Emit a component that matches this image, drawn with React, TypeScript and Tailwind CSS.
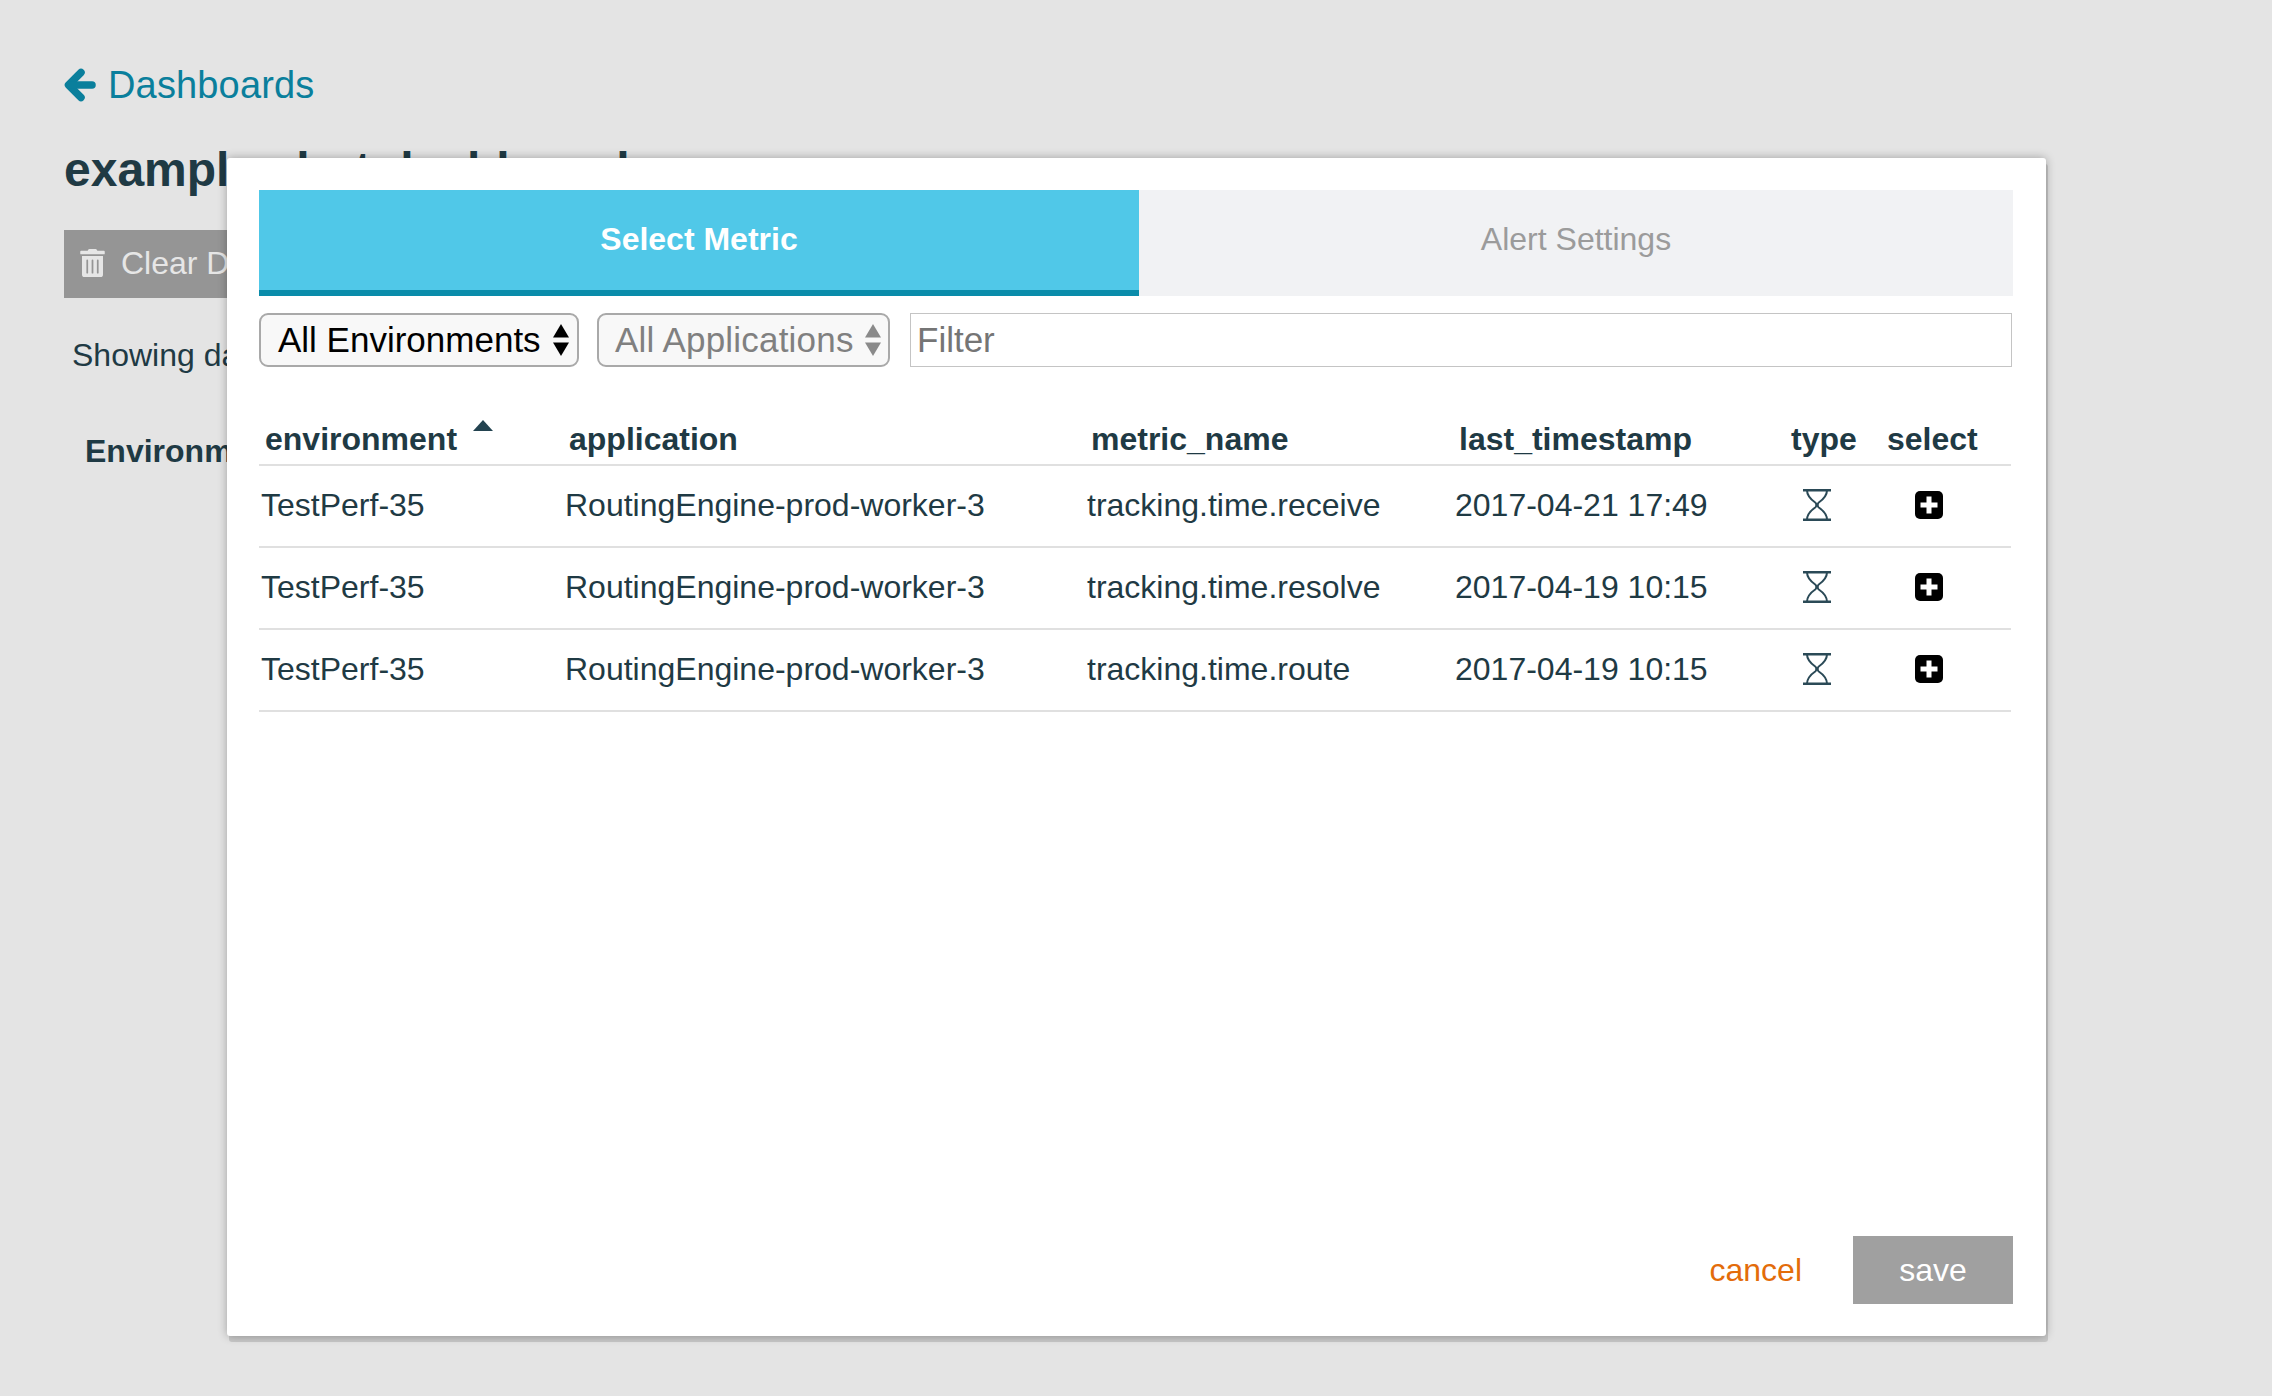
import React from "react";
import { FaTrashAlt } from "react-icons/fa";

const rows = [
  ["TestPerf-35", "RoutingEngine-prod-worker-3", "tracking.time.receive", "2017-04-21 17:49"],
  ["TestPerf-35", "RoutingEngine-prod-worker-3", "tracking.time.resolve", "2017-04-19 10:15"],
  ["TestPerf-35", "RoutingEngine-prod-worker-3", "tracking.time.route", "2017-04-19 10:15"],
];

function Hourglass() {
  return (
    <svg width="28" height="32" viewBox="0 0 28 32" fill="none" stroke="#2b4a57" strokeWidth="2" className="block">
      <path d="M0 1.2h28M0 30.8h28" strokeWidth="2.4" />
      <path d="M4 1.2c0 4 2 8 8.5 12.5c1 .8 1 3.8 0 4.6C6 22.8 4 26.8 4 30.8" />
      <path d="M24 1.2c0 4-2 8-8.5 12.5c-1 .8-1 3.8 0 4.6c6.500 4.500 8.500 8.500 8.500 12.500" />
    </svg>
  );
}

function PlusBox() {
  return (
    <svg width="28" height="28" viewBox="0 0 28 28" className="block">
      <rect x="0" y="0" width="28" height="28" rx="5" fill="#000" />
      <path d="M11.5 5.500h5v6h6v5h-6v6h-5v-6h-6v-5h6z" fill="#fff" />
    </svg>
  );
}

function SelectArrows({ color }: { color: string }) {
  return (
    <svg width="18" height="34" viewBox="0 0 18 34" className="block shrink-0">
      <path d="M9 1L17 14.500H1z" fill={color} />
      <path d="M9 33L17 19.500H1z" fill={color} />
    </svg>
  );
}

function BackArrow() {
  return (
    <svg width="32" height="34" viewBox="0 0 32 34" fill="none" stroke="#0a7f9c" strokeWidth="7.500" strokeLinecap="round" strokeLinejoin="round" className="block shrink-0">
      <path d="M17 4.500L4.500 17L17 29.500" />
      <path d="M6 17H28" />
    </svg>
  );
}

export default function App() {
  return (
    <div className="relative w-full h-[1396px] overflow-hidden bg-[#e4e4e4] font-['Liberation_Sans',Arial,sans-serif] text-[32px] text-[#1f3a44]">
      <div className="flex flex-col items-start pl-[64px] pt-[62px]">
        <a className="flex items-center gap-[12px] text-[38px] leading-[46px] text-[#0a7f9c]">
          <BackArrow />
          <span className="tracking-[0.15px]">Dashboards</span>
        </a>
        <h1 className="mt-[34px] text-[48px] leading-[56px] font-bold whitespace-nowrap">example alert dashboard</h1>
        <button className="mt-[32px] flex items-center gap-[16px] h-[68px] w-[320px] pl-[16px] pb-[2px] bg-[#959595] text-[#e6e6e6]">
          <FaTrashAlt className="w-[25px] h-[28px]" />
          <span>Clear Data</span>
        </button>
        <p className="mt-[38px] ml-[8px] leading-[38px]">Showing data from</p>
        <p className="mt-[58px] ml-[21px] font-bold leading-[38px]">Environment</p>
      </div>

      <div className="absolute left-[227px] top-[158px] w-[1819px] h-[1178px] flex flex-col bg-white rounded-[3px] pt-[32px] pl-[32px] pr-[33px] pb-[32px] shadow-[2px_6px_0_rgba(0,0,0,0.12),0_0_10px_rgba(0,0,0,0.3)]">
        <div className="flex h-[106px] shrink-0">
          <div className="w-[880px] flex items-center justify-center pb-[2px] bg-[#50c8e8] border-b-[6px] border-[#0a8caa] font-bold text-white">
            Select Metric
          </div>
          <div className="flex-1 flex items-center justify-center bg-[#f1f2f4] text-[#9b9b9b] pb-[8px]">Alert Settings</div>
        </div>

        <div className="mt-[17px] flex h-[54px] shrink-0">
          <button className="w-[320px] flex items-center justify-between pl-[17px] pr-[7px] bg-[#f8f8f8] border-2 border-[#a9a9a9] rounded-[9px] text-[35px] text-black">
            <span>All Environments</span>
            <SelectArrows color="#000" />
          </button>
          <button className="ml-[18px] w-[293px] flex items-center justify-between pl-[16px] pr-[6px] bg-[#f8f8f8] border-2 border-[#a9a9a9] rounded-[9px] text-[35px] text-[#808080]">
            <span className="tracking-[0.2px]">All Applications</span>
            <SelectArrows color="#8a8a8a" />
          </button>
          <input
            placeholder="Filter"
            className="ml-[20px] flex-1 mr-px border border-[#c4c4c4] pl-[6px] text-[35px] outline-none bg-white placeholder:text-[#757575]"
          />
        </div>

        <table className="table-fixed w-[1752px] border-collapse">
          <colgroup>
            <col className="w-[304px]" />
            <col className="w-[522px]" />
            <col className="w-[368px]" />
            <col className="w-[330px]" />
            <col className="w-[100px]" />
            <col className="w-[128px]" />
          </colgroup>
          <thead>
            <tr className="border-b-2 border-[#e0e0e0]">
              <th className="h-[98px] align-bottom pb-[1px] pl-[6px] text-left font-bold">
                <span className="inline-flex items-start">
                  environment
                  <svg width="20" height="11" viewBox="0 0 20 11" className="ml-[16px] mt-[5px]">
                    <path d="M10 0L20 11H0z" fill="#234350" />
                  </svg>
                </span>
              </th>
              <th className="h-[98px] align-bottom pb-[1px] pl-[6px] text-left font-bold">application</th>
              <th className="h-[98px] align-bottom pb-[1px] pl-[6px] text-left font-bold">metric_name</th>
              <th className="h-[98px] align-bottom pb-[1px] pl-[6px] text-left font-bold">last_timestamp</th>
              <th className="h-[98px] align-bottom pb-[1px] pl-[8px] text-left font-bold">type</th>
              <th className="h-[98px] align-bottom pb-[1px] pl-[4px] text-left font-bold">select</th>
            </tr>
          </thead>
          <tbody>
            {rows.map((r, i) => (
              <tr key={i} className="border-b-2 border-[#e0e0e0]">
                {r.map((c, j) => (
                  <td key={j} className="h-[82px] pl-[2px] pb-[3px] whitespace-nowrap">
                    {c}
                  </td>
                ))}
                <td className="h-[82px] pl-[20px] pb-[2px]">
                  <Hourglass />
                </td>
                <td className="h-[82px] pl-[32px] pb-[2px]">
                  <PlusBox />
                </td>
              </tr>
            ))}
          </tbody>
        </table>

        <div className="mt-auto flex items-center justify-end gap-[51px]">
          <button className="text-[#e36c0a]">cancel</button>
          <button className="w-[160px] h-[68px] bg-[#a0a0a0] text-white">save</button>
        </div>
      </div>
    </div>
  );
}
